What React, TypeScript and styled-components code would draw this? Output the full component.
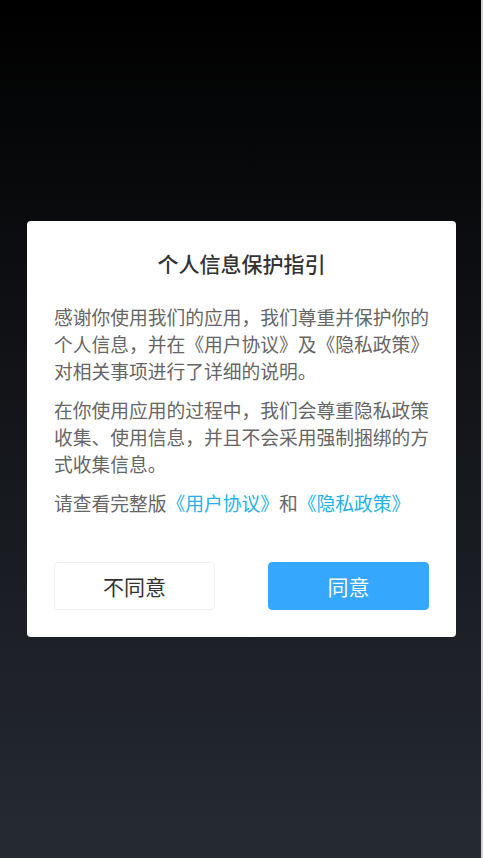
import React from "react";
import styled, { createGlobalStyle } from "styled-components";

const GlobalStyle = createGlobalStyle`
  html, body {
    margin: 0;
    padding: 0;
    background: #d2d2d2;
  }
  body {
    font-family: "Noto Sans CJK SC", "Noto Sans", sans-serif;
  }
  * {
    box-sizing: border-box;
  }
`;

const Overlay = styled.div`
  width: 481px;
  min-height: 100vh;
  padding: 0 25px 0 27px;
  display: flex;
  align-items: center;
  background: linear-gradient(180deg, #000000 0%, #121418 45%, #262a32 100%);
`;

const Dialog = styled.div`
  width: 429px;
  background: #ffffff;
  border-radius: 4px;
  padding: 27px 27px 27px;
  display: flex;
  flex-direction: column;
`;

const Title = styled.h2`
  margin: 0 0 25px;
  font-size: 21px;
  line-height: 30px;
  font-weight: 500;
  color: #333333;
  text-align: center;
`;

const Paragraph = styled.p<{ $last?: boolean }>`
  margin: 0 0 ${(p) => (p.$last ? "46px" : "12px")};
  font-size: 18.75px;
  line-height: 27px;
  color: #666666;
  letter-spacing: 0;
`;

const Link = styled.span`
  color: #22b3ea;
`;

const Actions = styled.div`
  display: flex;
  justify-content: space-between;
`;

const Button = styled.button<{ $primary?: boolean }>`
  width: 161px;
  height: 48px;
  border-radius: 4px;
  font-family: inherit;
  font-size: 21px;
  cursor: pointer;
  border: 1px solid ${(p) => (p.$primary ? "#35a7fc" : "#eeeeee")};
  background: ${(p) => (p.$primary ? "#35a7fc" : "#ffffff")};
  color: ${(p) => (p.$primary ? "#ffffff" : "#333333")};
`;

const App: React.FC = () => {
  return (
    <>
      <GlobalStyle />
      <Overlay>
        <Dialog>
          <Title>个人信息保护指引</Title>
          <Paragraph>
            感谢你使用我们的应用，我们尊重并保护你的个人信息，并在《用户协议》及《隐私政策》对相关事项进行了详细的说明。
          </Paragraph>
          <Paragraph>
            在你使用应用的过程中，我们会尊重隐私政策收集、使用信息，并且不会采用强制捆绑的方式收集信息。
          </Paragraph>
          <Paragraph $last>
            请查看完整版<Link>《用户协议》</Link>和<Link>《隐私政策》</Link>
          </Paragraph>
          <Actions>
            <Button>不同意</Button>
            <Button $primary>同意</Button>
          </Actions>
        </Dialog>
      </Overlay>
    </>
  );
};

export default App;
